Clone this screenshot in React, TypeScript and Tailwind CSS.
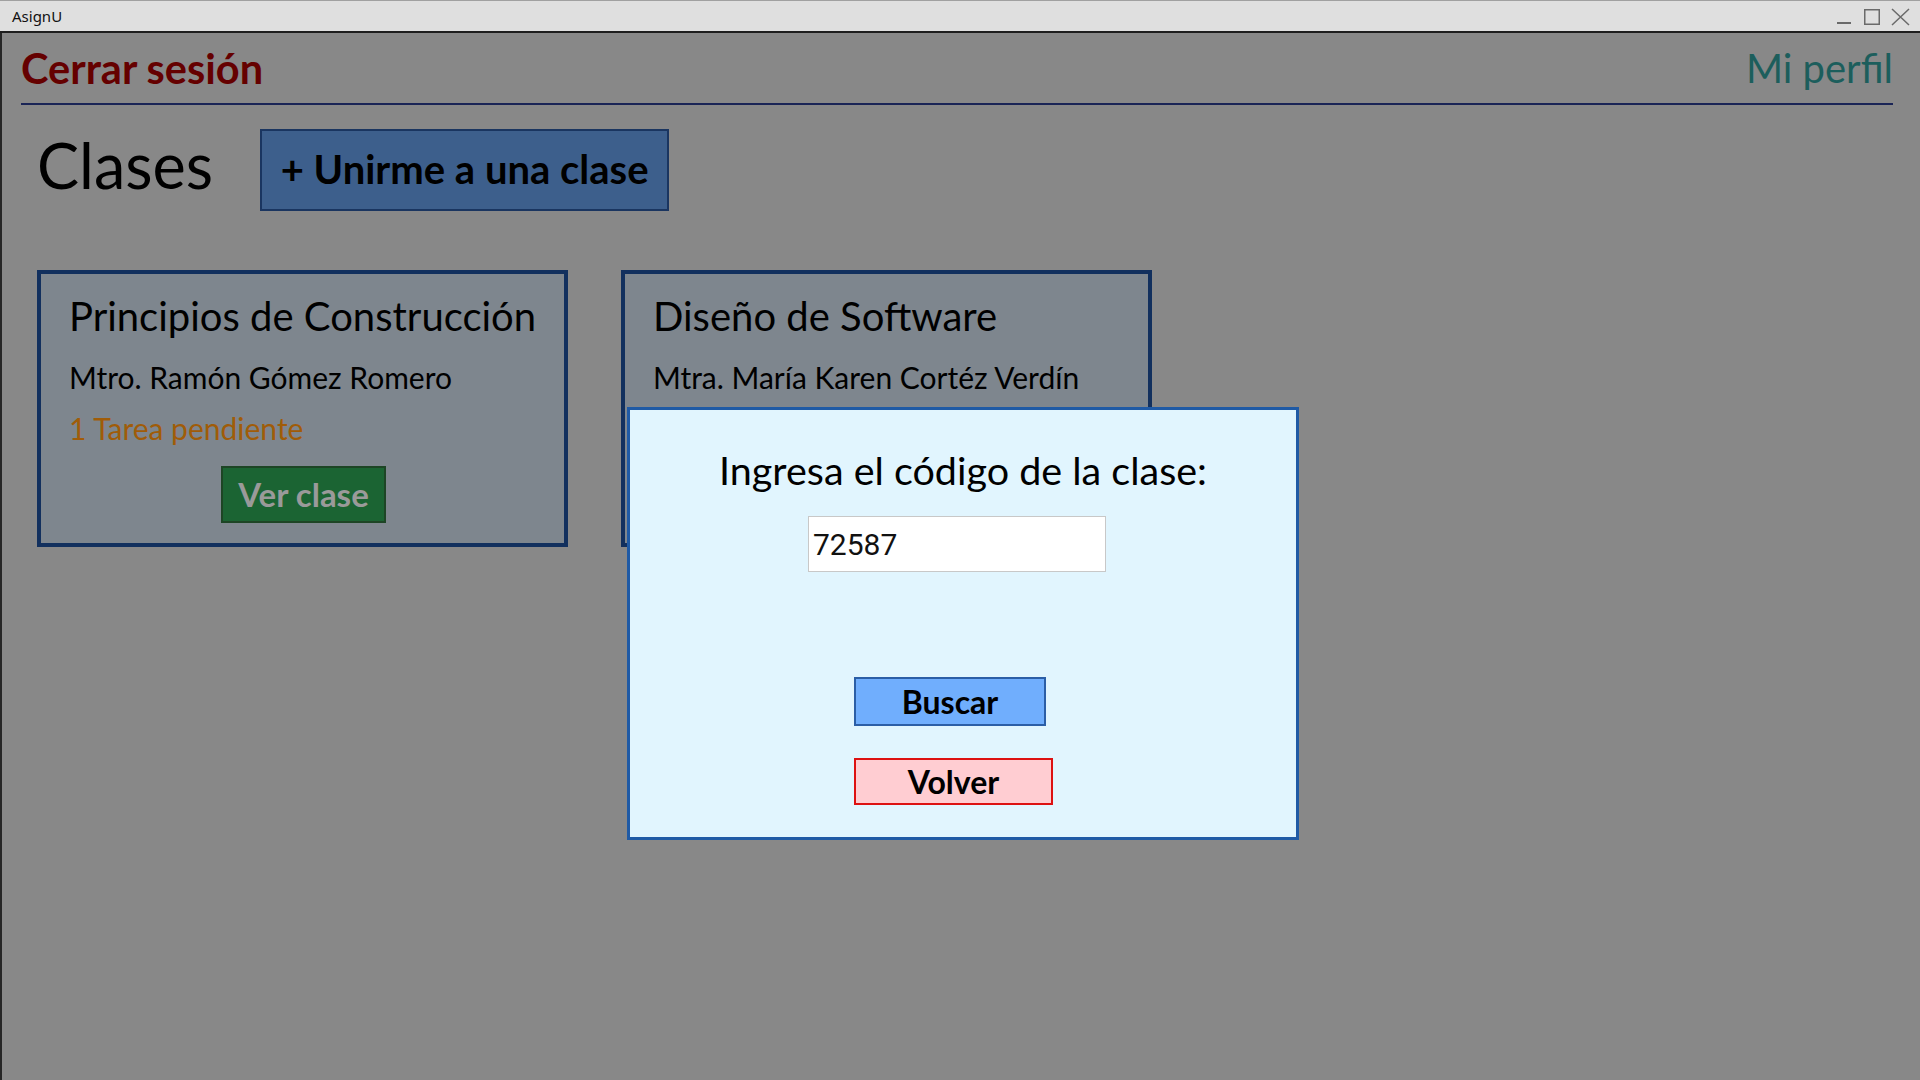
export default function App() {
  return (
    <div className="relative flex h-screen w-full flex-col bg-[#888888] font-['Lato',sans-serif] text-black">
      <TitleBar />
      <main className="flex flex-1 flex-col border-l-2 border-[#262626]">
        <header className="ml-[19px] mr-[27px] flex items-start justify-between border-b-2 border-[#1a2456] pt-[11px] pb-[11px]">
          <span className="text-[41.5px] font-bold leading-[48px] text-[#650000]">Cerrar sesión</span>
          <span className="text-[40px] leading-[48px] text-[#1c5e5c]">Mi perfil</span>
        </header>

        <div className="mt-[24px] flex items-start gap-[47px] pl-[35px]">
          <h1 className="text-[63px] leading-[72px]">Clases</h1>
          <button className="flex h-[82px] w-[409px] items-center justify-center border-2 border-[#1a3560] bg-[#3d5f8c] pb-[2px] text-[40px] font-bold leading-none">
            + Unirme a una clase
          </button>
        </div>

        <div className="mt-[59px] flex items-start gap-[53px] pl-[35px]">
          <ClassCard
            title="Principios de Construcción"
            teacher="Mtro. Ramón Gómez Romero"
            pending="1 Tarea pendiente"
          />
          <ClassCard title="Diseño de Software" teacher="Mtra. María Karen Cortéz Verdín" pending="" />
        </div>
      </main>

      <JoinDialog />
    </div>
  );
}

function TitleBar() {
  return (
    <div className="flex h-[33px] shrink-0 items-center justify-between border-t border-b-2 border-t-[#a0a0a0] border-b-[#1e1e1e] bg-[#dfdfdf]">
      <span className="pl-[12px] font-['Noto_Sans',sans-serif] text-[15px] text-[#111]">AsignU</span>
      <svg width="90" height="30" viewBox="0 0 90 30" className="text-[#6a6a6a]">
        <rect x="7" y="21" width="14" height="2" fill="currentColor" />
        <rect x="34.75" y="8.75" width="14.5" height="14.5" fill="none" stroke="currentColor" strokeWidth="1.5" />
        <path d="M62 8 L79 24 M79 8 L62 24" stroke="currentColor" strokeWidth="1.5" />
      </svg>
    </div>
  );
}

function ClassCard({ title, teacher, pending }: { title: string; teacher: string; pending: string }) {
  return (
    <section className="flex h-[277px] w-[531px] flex-col border-4 border-[#12305e] bg-[#7e868e] pl-[28px] pt-[18px]">
      <h2 className="text-[40px] leading-[48px]">{title}</h2>
      <p className="mt-[20px] text-[30px] leading-[35px]">{teacher}</p>
      {pending && (
        <>
          <p className="mt-[15px] text-[30px] leading-[37px] text-[#a05c08]">{pending}</p>
          <button className="ml-[152px] mt-[19px] flex h-[57px] w-[165px] items-center justify-center self-start border-2 border-[#1d4525] bg-[#1b6433] text-[33px] font-bold leading-none text-[#9a9a9a]">
            Ver clase
          </button>
        </>
      )}
    </section>
  );
}

function JoinDialog() {
  return (
    <div className="absolute left-[627px] top-[407px] flex h-[433px] w-[672px] flex-col border-[3px] border-[#1f5aa5] bg-[#e1f5fe]">
      <p className="pt-[36px] text-center text-[39.5px] leading-[48px]">Ingresa el código de la clase:</p>
      <input
        readOnly
        value="72587"
        className="ml-[178px] mt-[22px] h-[56px] w-[298px] border border-[#c8c8c8] bg-white pl-[4px] font-['Roboto',sans-serif] text-[30px] text-[#111] outline-none"
      />
      <button className="ml-[224px] mt-[105px] flex h-[49px] w-[192px] items-center justify-center border-2 border-[#2b5ea6] bg-[#70aefd] text-[32px] font-bold leading-none">
        Buscar
      </button>
      <button className="ml-[224px] mt-[32px] flex h-[47px] w-[199px] items-center justify-center border-2 border-[#dd1111] bg-[#ffcdd2] text-[32px] font-bold leading-none">
        Volver
      </button>
    </div>
  );
}
